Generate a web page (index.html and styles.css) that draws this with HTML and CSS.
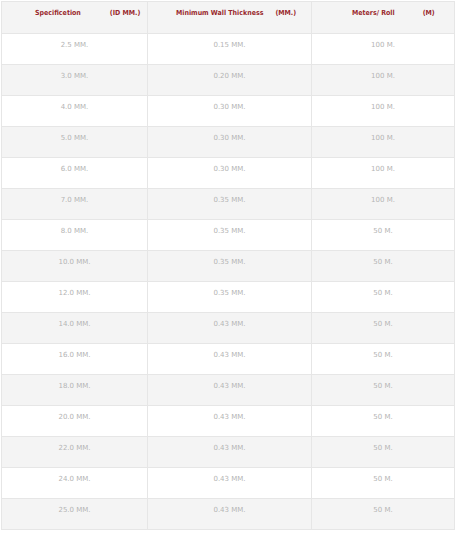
FILE: index.html
```html
<!DOCTYPE html>
<html>
<head>
<meta charset="utf-8">
<link rel="stylesheet" href="styles.css">
</head>
<body>
<table class="spec">
  <colgroup>
    <col class="w1">
    <col class="w2">
    <col class="w3">
  </colgroup>
  <thead>
    <tr>
      <th class="c1"><span>Specificetion</span><span class="unit u1">(ID MM.)</span></th>
      <th class="c2"><span>Minimum Wall Thickness</span><span class="unit u2">(MM.)</span></th>
      <th class="c3"><span>Meters/ Roll</span><span class="unit u3">(M)</span></th>
    </tr>
  </thead>
  <tbody>
    <tr><td>2.5 MM.</td><td>0.15 MM.</td><td>100 M.</td></tr>
    <tr><td>3.0 MM.</td><td>0.20 MM.</td><td>100 M.</td></tr>
    <tr><td>4.0 MM.</td><td>0.30 MM.</td><td>100 M.</td></tr>
    <tr><td>5.0 MM.</td><td>0.30 MM.</td><td>100 M.</td></tr>
    <tr><td>6.0 MM.</td><td>0.30 MM.</td><td>100 M.</td></tr>
    <tr><td>7.0 MM.</td><td>0.35 MM.</td><td>100 M.</td></tr>
    <tr><td>8.0 MM.</td><td>0.35 MM.</td><td>50 M.</td></tr>
    <tr><td>10.0 MM.</td><td>0.35 MM.</td><td>50 M.</td></tr>
    <tr><td>12.0 MM.</td><td>0.35 MM.</td><td>50 M.</td></tr>
    <tr><td>14.0 MM.</td><td>0.43 MM.</td><td>50 M.</td></tr>
    <tr><td>16.0 MM.</td><td>0.43 MM.</td><td>50 M.</td></tr>
    <tr><td>18.0 MM.</td><td>0.43 MM.</td><td>50 M.</td></tr>
    <tr><td>20.0 MM.</td><td>0.43 MM.</td><td>50 M.</td></tr>
    <tr><td>22.0 MM.</td><td>0.43 MM.</td><td>50 M.</td></tr>
    <tr><td>24.0 MM.</td><td>0.43 MM.</td><td>50 M.</td></tr>
    <tr><td>25.0 MM.</td><td>0.43 MM.</td><td>50 M.</td></tr>
  </tbody>
</table>
</body>
</html>
```
FILE: styles.css
```css
html, body {
  margin: 0;
  padding: 0;
  background: #ffffff;
}
body {
  padding: 1px 0 0 1px;
  font-family: "DejaVu Sans", Verdana, sans-serif;
}
.spec {
  border-collapse: collapse;
  table-layout: fixed;
  width: 453px;
  border: 1px solid #e6e6e6;
}
.w1 { width: 146px; }
.w2 { width: 164px; }
.w3 { width: 143px; }
.spec th, .spec td {
  border: 1px solid #e6e6e6;
  vertical-align: top;
  padding: 0;
  overflow: hidden;
}
.spec th {
  background: #f4f4f4;
  color: #9a2a2e;
  font-family: "DejaVu Sans Condensed", "DejaVu Sans", sans-serif;
  font-weight: bold;
  font-size: 7px;
  line-height: 8px;
  height: 24px;
  padding-top: 7px;
  text-align: left;
  white-space: nowrap;
}
.spec th.c1 { padding-left: 33px; }
.spec th.c2 { padding-left: 28px; }
.spec th.c3 { padding-left: 40px; }
.unit { display: inline-block; }
.u1 { margin-left: 29px; }
.u2 { margin-left: 12px; }
.u3 { margin-left: 28px; }
.spec td {
  color: #b4b4b4;
  font-size: 7px;
  line-height: 8px;
  height: 23px;
  padding-top: 7px;
  text-align: center;
}
.spec tbody tr:nth-child(even) td {
  background: #f4f4f4;
}
```
